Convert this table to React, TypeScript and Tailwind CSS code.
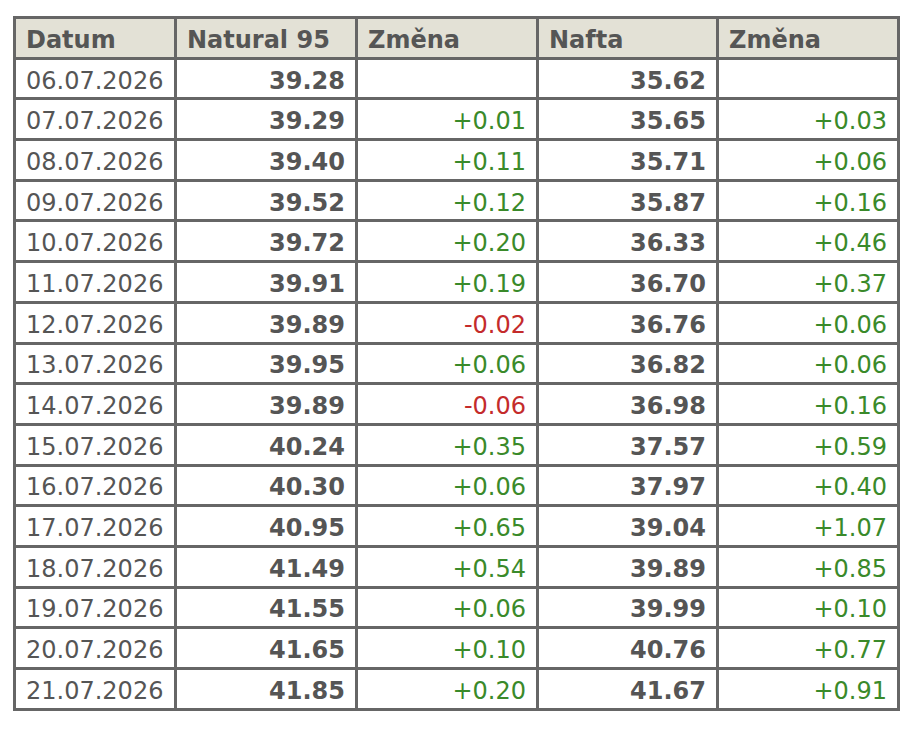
import React from "react";

const rows: [string, string, string, string, string][] = [
  ["06.07.2026", "39.28", "", "35.62", ""],
  ["07.07.2026", "39.29", "+0.01", "35.65", "+0.03"],
  ["08.07.2026", "39.40", "+0.11", "35.71", "+0.06"],
  ["09.07.2026", "39.52", "+0.12", "35.87", "+0.16"],
  ["10.07.2026", "39.72", "+0.20", "36.33", "+0.46"],
  ["11.07.2026", "39.91", "+0.19", "36.70", "+0.37"],
  ["12.07.2026", "39.89", "-0.02", "36.76", "+0.06"],
  ["13.07.2026", "39.95", "+0.06", "36.82", "+0.06"],
  ["14.07.2026", "39.89", "-0.06", "36.98", "+0.16"],
  ["15.07.2026", "40.24", "+0.35", "37.57", "+0.59"],
  ["16.07.2026", "40.30", "+0.06", "37.97", "+0.40"],
  ["17.07.2026", "40.95", "+0.65", "39.04", "+1.07"],
  ["18.07.2026", "41.49", "+0.54", "39.89", "+0.85"],
  ["19.07.2026", "41.55", "+0.06", "39.99", "+0.10"],
  ["20.07.2026", "41.65", "+0.10", "40.76", "+0.77"],
  ["21.07.2026", "41.85", "+0.20", "41.67", "+0.91"],
];

function Change({ v }: { v: string }) {
  if (!v) return null;
  return <span className={v.startsWith("-") ? "text-[#c42b2b]" : "text-[#3a8a2a]"}>{v}</span>;
}

export default function App() {
  const td = "border-[3px] border-[#666666] h-[40.7px] px-[10px] pt-[4px] pb-0 leading-none";
  return (
    <div className="bg-white w-[914px] h-[741px] pt-[16px] pl-[13px]" style={{ fontFamily: '"DejaVu Sans", Verdana, sans-serif' }}>
      <table className="border-collapse text-[24px] text-[#555555] w-[884px] table-fixed">
        <colgroup>
          <col className="w-[161px]" />
          <col className="w-[181px]" />
          <col className="w-[181px]" />
          <col className="w-[180px]" />
          <col className="w-[181px]" />
        </colgroup>
        <thead>
          <tr className="bg-[#e3e1d6]">
            <th className={`${td} text-left font-bold`}>Datum</th>
            <th className={`${td} text-left font-bold`}>Natural 95</th>
            <th className={`${td} text-left font-bold`}>Změna</th>
            <th className={`${td} text-left font-bold`}>Nafta</th>
            <th className={`${td} text-left font-bold`}>Změna</th>
          </tr>
        </thead>
        <tbody>
          {rows.map((r) => (
            <tr key={r[0]}>
              <td className={`${td} text-left`}>{r[0]}</td>
              <td className={`${td} text-right font-bold`}>{r[1]}</td>
              <td className={`${td} text-right`}><Change v={r[2]} /></td>
              <td className={`${td} text-right font-bold`}>{r[3]}</td>
              <td className={`${td} text-right`}><Change v={r[4]} /></td>
            </tr>
          ))}
        </tbody>
      </table>
    </div>
  );
}
